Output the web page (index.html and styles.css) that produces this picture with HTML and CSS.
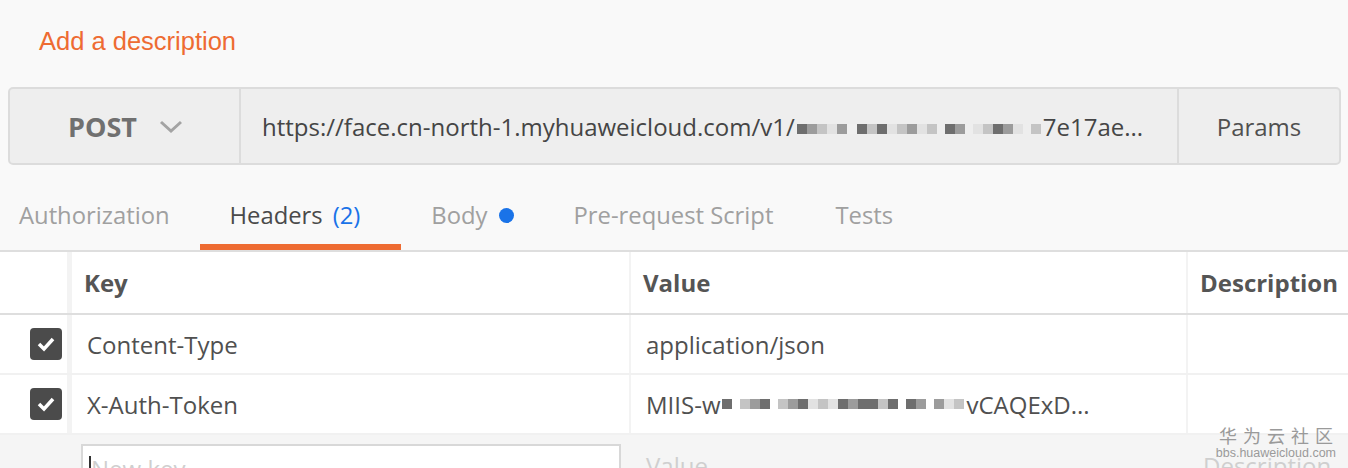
FILE: index.html
```html
<!DOCTYPE html>
<html lang="en">
<head>
    <meta charset="UTF-8">
    <title>Request</title>
    <link rel="stylesheet" href="styles.css">
</head>
<body>
    <div class="desc-area">
        <a href="#" class="add-desc">Add a description</a>
    </div>

    <div class="request-bar">
        <div class="method">
            <span>POST</span>
            <svg class="chevron" width="24" height="14" viewBox="0 0 24 14"><path d="M2 2 L12 11 L22 2" fill="none" stroke="#a3a3a3" stroke-width="3"/></svg>
        </div>
        <div class="url">
            <span class="url-text">https://face.cn-north-1.myhuaweicloud.com/v1/<span class="pix"><i class="p4"></i><i class="p3"></i><i class="p2"></i><i class="p1"></i><i class="p3"></i><i class="p5"></i><i class="p4"></i><i class="p2"></i><i class="p4"></i><i class="p1"></i><i class="p2"></i><i class="p3"></i><i class="p1"></i><i class="p2"></i><i class="gap"></i><i class="p4"></i><i class="p3"></i><i class="gap"></i><i class="p1"></i><i class="p2"></i><i class="p4"></i><i class="p3"></i><i class="p1"></i><i class="gap"></i><i class="p2"></i></span>7e17ae...</span>
        </div>
        <div class="params">Params</div>
    </div>

    <div class="tabs">
        <div class="tab first">Authorization</div>
        <div class="tab active">Headers <span class="count">(2)</span></div>
        <div class="tab">Body <span class="dot"></span></div>
        <div class="tab">Pre-request Script</div>
        <div class="tab">Tests</div>
    </div>

    <div class="table">
        <div class="row head">
            <div class="cell check"></div>
            <div class="cell">Key</div>
            <div class="cell">Value</div>
            <div class="cell">Description</div>
        </div>
        <div class="row">
            <div class="cell check"><span class="box"><svg width="20" height="16" viewBox="0 0 20 16"><path d="M3 8 L8 13 L17 3" fill="none" stroke="#fff" stroke-width="3.5"/></svg></span></div>
            <div class="cell">Content-Type</div>
            <div class="cell">application/json</div>
            <div class="cell"></div>
        </div>
        <div class="row">
            <div class="cell check"><span class="box"><svg width="20" height="16" viewBox="0 0 20 16"><path d="M3 8 L8 13 L17 3" fill="none" stroke="#fff" stroke-width="3.5"/></svg></span></div>
            <div class="cell">X-Auth-Token</div>
            <div class="cell">MIIS-w<span class="pix"><i class="p4"></i><i class="gap"></i><i class="p2"></i><i class="p3"></i><i class="p4"></i><i class="gap"></i><i class="p2"></i><i class="p3"></i><i class="p4"></i><i class="p1"></i><i class="p2"></i><i class="p1"></i><i class="p4"></i><i class="p3"></i><i class="p4"></i><i class="p4"></i><i class="p2"></i><i class="p4"></i><i class="gap"></i><i class="p4"></i><i class="p3"></i><i class="gap"></i><i class="p3"></i><i class="p1"></i><i class="p2"></i></span>vCAQExD...</div>
            <div class="cell"></div>
        </div>
        <div class="row new">
            <div class="cell check"></div>
            <div class="cell"><div class="new-input"><span class="caret"></span>New key</div></div>
            <div class="cell placeholder">Value</div>
            <div class="cell placeholder">Description</div>
        </div>
    </div>

    <div class="watermark">
        <div class="wm-cn">华为云社区</div>
        <div class="wm-url">bbs.huaweicloud.com</div>
    </div>
</body>
</html>
```

FILE: styles.css
```css
body {
    margin: 0;
    background: #f9f9f9;
    font-family: "Open Sans", sans-serif;
    color: #505050;
    overflow: hidden;
}
.desc-area {
    padding: 26px 39px 0;
    height: 61px;
}
.add-desc {
    font-family: "Liberation Sans", Arial, sans-serif;
    font-size: 25.5px;
    line-height: 30px;
    color: #ee6b32;
    text-decoration: none;
}
.request-bar {
    display: flex;
    margin: 0 7px 0 8px;
    height: 74px;
    background: #eeeeee;
    border: 2px solid #dcdcdc;
    border-radius: 5px;
    font-size: 24px;
}
.method {
    width: 231px;
    display: flex;
    align-items: center;
    justify-content: center;
    gap: 22px;
    font-weight: bold;
    font-size: 27px;
    color: #707070;
    border-right: 2px solid #dcdcdc;
    padding-left: 2px;
    box-sizing: border-box;
}
.chevron {
    margin-top: 2px;
}
.url {
    flex: 1;
    display: flex;
    align-items: center;
    padding: 0 16px 0 21px;
    overflow: hidden;
    white-space: nowrap;
    color: #454545;
}
.params {
    width: 160px;
    display: flex;
    align-items: center;
    justify-content: center;
    border-left: 2px solid #dcdcdc;
    color: #505050;
}
.pix {
    display: inline-flex;
    align-items: center;
    height: 24px;
    vertical-align: middle;
    margin: 0 2px;
}
.pix i {
    display: inline-block;
    width: 10px;
    height: 10px;
}
.pix .p1 { background: #e2e2e2; }
.pix .p2 { background: #c4c4c4; }
.pix .p3 { background: #9c9c9c; }
.pix .p4 { background: #6e6e6e; }
.pix .p5 { background: #f0f0f0; }
.pix .gap { width: 8px; background: transparent; }
.tabs {
    display: flex;
    margin-top: 21px;
    height: 64px;
    border-bottom: 2px solid #dedede;
    font-size: 23.8px;
    color: #a0a0a0;
}
.tab {
    display: flex;
    align-items: center;
    padding: 0 30px;
    border-bottom: 6px solid transparent;
    white-space: nowrap;
}
.tab.first {
    padding-left: 19px;
}
.tab.active {
    color: #4a4a4a;
    border-bottom-color: #ee6b32;
    padding-right: 41px;
}
.tab:last-child {
    padding-left: 32px;
}
.count {
    color: #1a73e8;
    margin-left: 10px;
}
.dot {
    display: inline-block;
    width: 15px;
    height: 15px;
    border-radius: 50%;
    background: #1a73e8;
    margin-left: 11px;
}
.table {
    background: #fff;
    font-size: 24px;
}
.row {
    display: grid;
    grid-template-columns: 72px 559px 557px 1fr;
    height: 58px;
    border-bottom: 2px solid #f1f1f1;
}
.row.head {
    height: 61px;
    border-bottom-color: #dedede;
    font-weight: bold;
    color: #555;
}
.cell {
    display: flex;
    align-items: center;
    padding-left: 15px;
    border-right: 2px solid #f3f3f3;
    white-space: nowrap;
    overflow: hidden;
}
.row.head .cell {
    padding-left: 12px;
}
.cell.check {
    padding-left: 30px;
    border-right-width: 5px;
}
.cell:last-child {
    border-right: none;
}
.box {
    width: 32px;
    height: 32px;
    border-radius: 4px;
    background: #4b4b4b;
    display: flex;
    align-items: center;
    justify-content: center;
}
.row.new {
    background: #f5f5f5;
    height: 60px;
    border: none;
}
.row.new .cell {
    border-right: none;
    align-items: flex-start;
    padding-top: 14px;
    color: #cfcfcf;
}
.row.new .cell:nth-child(2) {
    padding: 9px 0 0 9px;
}
.new-input {
    width: 540px;
    height: 60px;
    background: #fff;
    border: 2px solid #d8d8d8;
    box-sizing: border-box;
    padding: 6px 0 0 6px;
    display: flex;
    align-items: flex-start;
    color: #cfcfcf;
}
.caret {
    width: 2px;
    height: 26px;
    background: #333;
    margin-top: 4px;
}
.watermark {
    position: absolute;
    right: 12px;
    bottom: 8px;
    text-align: center;
    color: #9a9a9a;
}
.wm-cn {
    font-family: "Noto Sans CJK SC", sans-serif;
    font-size: 18px;
    letter-spacing: 6px;
    margin-right: -6px;
    line-height: 21px;
}
.wm-url {
    font-family: "Liberation Sans", sans-serif;
    font-size: 12.5px;
    line-height: 14px;
}
```
